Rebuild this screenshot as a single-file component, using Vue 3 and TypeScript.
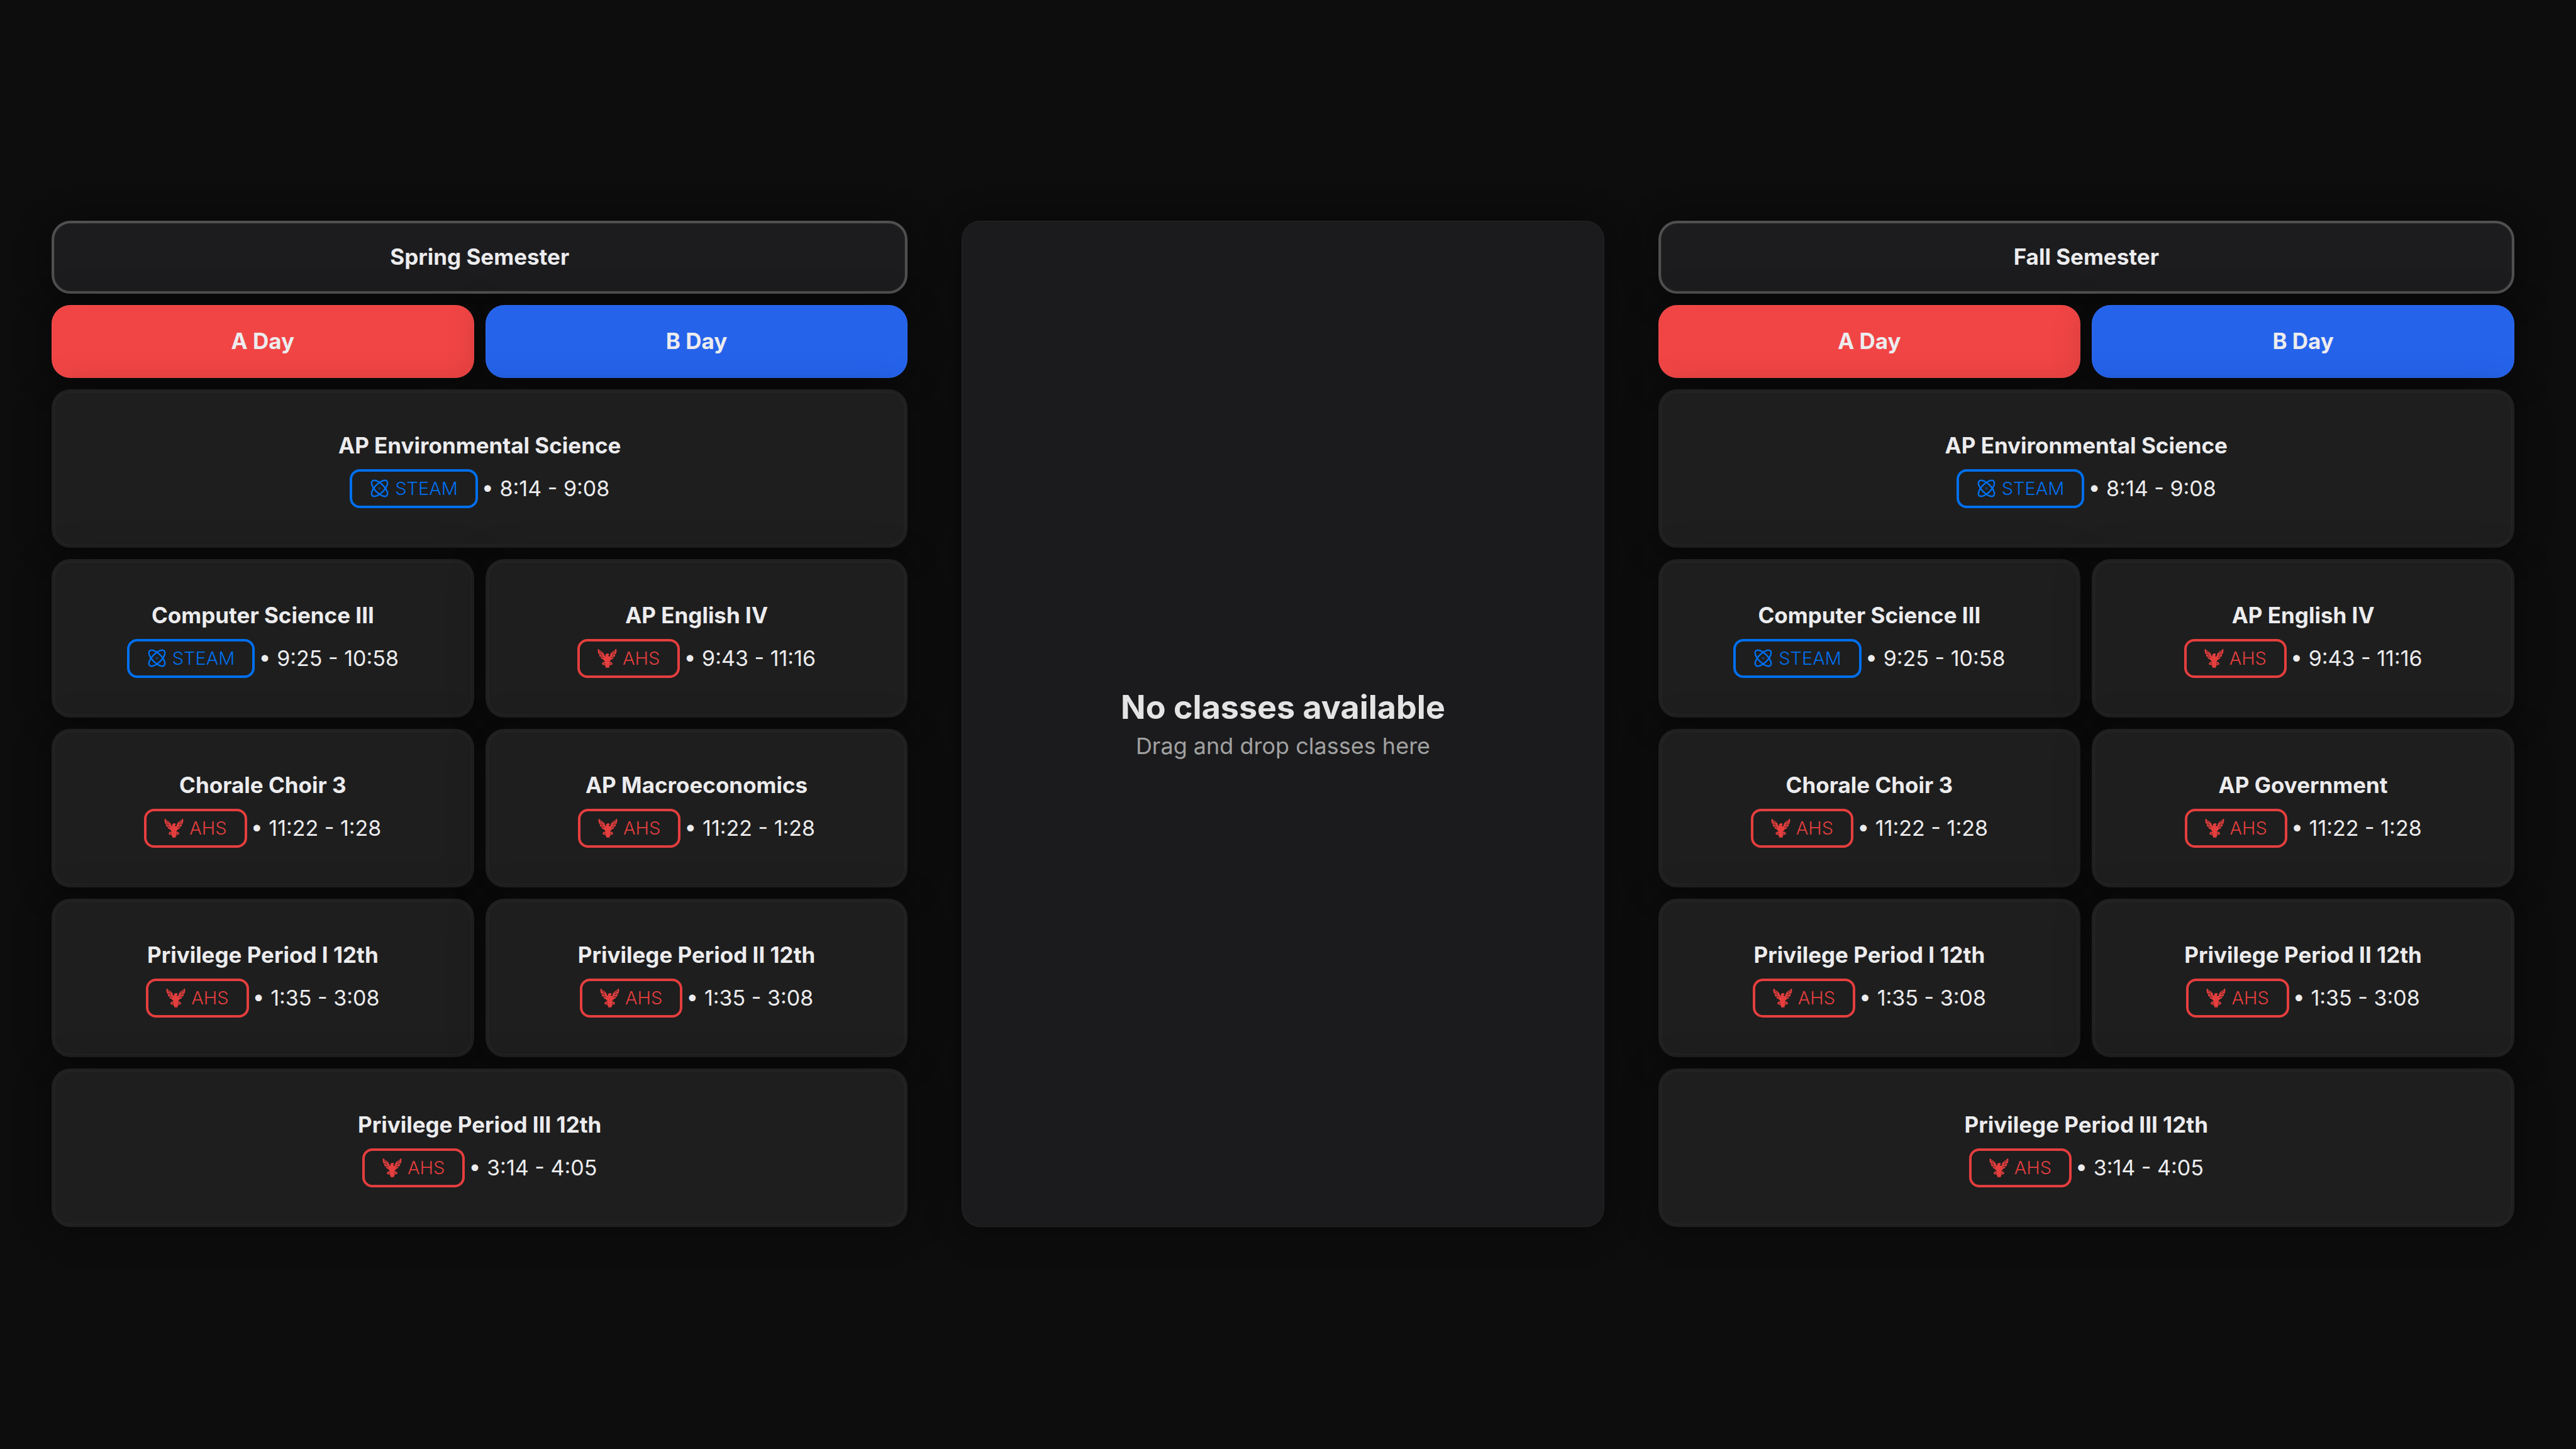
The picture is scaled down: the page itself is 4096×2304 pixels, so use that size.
<script setup lang="ts">
type Campus = 'STEAM' | 'AHS'

interface ClassBlock {
  name: string
  campus: Campus
  time: string
  wide?: boolean
}

interface Semester {
  title: string
  classes: ClassBlock[]
}

function buildClasses(thirdPeriodB: string): ClassBlock[] {
  return [
    { name: 'AP Environmental Science', campus: 'STEAM', time: '8:14 - 9:08', wide: true },
    { name: 'Computer Science III', campus: 'STEAM', time: '9:25 - 10:58' },
    { name: 'AP English IV', campus: 'AHS', time: '9:43 - 11:16' },
    { name: 'Chorale Choir 3', campus: 'AHS', time: '11:22 - 1:28' },
    { name: thirdPeriodB, campus: 'AHS', time: '11:22 - 1:28' },
    { name: 'Privilege Period I 12th', campus: 'AHS', time: '1:35 - 3:08' },
    { name: 'Privilege Period II 12th', campus: 'AHS', time: '1:35 - 3:08' },
    { name: 'Privilege Period III 12th', campus: 'AHS', time: '3:14 - 4:05', wide: true },
  ]
}

const spring: Semester = { title: 'Spring Semester', classes: buildClasses('AP Macroeconomics') }
const fall: Semester = { title: 'Fall Semester', classes: buildClasses('AP Government') }
</script>

<template>
  <main class="page">
    <template v-for="(semester, index) in [spring, fall]" :key="semester.title">
      <section v-if="index === 1" class="pool">
        <h2 class="pool-title">No classes available</h2>
        <p class="pool-hint">Drag and drop classes here</p>
      </section>

      <section class="semester">
        <h2 class="bar bar-title">{{ semester.title }}</h2>
        <h3 class="bar bar-a">A Day</h3>
        <h3 class="bar bar-b">B Day</h3>
        <article
          v-for="block in semester.classes"
          :key="block.name"
          class="card"
          :class="{ wide: block.wide }"
          draggable="true"
        >
          <h4 class="name">{{ block.name }}</h4>
          <div class="details">
            <span class="badge" :class="block.campus === 'STEAM' ? 'steam' : 'ahs'">
              <svg v-if="block.campus === 'STEAM'" class="icon" viewBox="1 1 22 22" aria-hidden="true">
                <g fill="none" stroke="currentColor" stroke-width="1.7">
                  <path d="M20.2 20.2c2.04-2.03.02-7.36-4.5-11.9-4.54-4.52-9.87-6.54-11.9-4.5-2.04 2.03-.02 7.36 4.5 11.9 4.54 4.52 9.87 6.54 11.9 4.5Z" />
                  <path d="M15.7 15.7c4.52-4.54 6.54-9.87 4.5-11.9-2.03-2.04-7.36-.02-11.9 4.5-4.52 4.54-6.54 9.87-4.5 11.9 2.03 2.04 7.36.02 11.9-4.5Z" />
                </g>
                <circle cx="12" cy="12" r="1.6" fill="currentColor" opacity="0.4" />
              </svg>
              <svg v-else class="icon" viewBox="0 0 138 138" aria-hidden="true">
                <path
                  fill="currentColor"
                  d="M5 2 18 15 32 23 44 34 50 52 56 58 56 46 62 38 74 36 82 40 82 58 88 52 94 34 106 23 120 15 133 2 136 16 132 36 126 42 124 56 115 62 110 74 98 78 88 90 86 97 98 96 106 106 104 116 92 117 84 123 82 137 58 137 56 123 46 117 34 116 32 106 40 96 52 97 50 90 40 78 28 74 23 62 14 56 12 42 6 36 2 16Z"
                />
                <g class="feathers">
                  <path d="M13 38 36 50M22 58 44 66M12 18 34 36" />
                  <path d="M125 38 102 50M116 58 94 66M126 18 104 36" />
                  <path d="M42 104 54 112M96 104 84 112" />
                </g>
                <circle class="eye" cx="82" cy="52" r="5" />
              </svg>
              {{ block.campus }}
            </span>
            <span class="time">• {{ block.time }}</span>
          </div>
        </article>
      </section>
    </template>
  </main>
</template>

<style>
body {
  margin: 0;
  background: #0d0d0d;
}
</style>

<style scoped>
.page {
  box-sizing: border-box;
  min-height: 100vh;
  padding: 0 98px 2px 82px;
  display: grid;
  grid-template-columns: 4fr 3fr 4fr;
  gap: 86px;
  align-content: center;
  background: #0d0d0d;
  color: #ececee;
  font-family: Inter, 'Liberation Sans', sans-serif;
}

h2,
h3,
h4,
p {
  margin: 0;
}

.semester {
  display: grid;
  grid-template-columns: 1fr 1fr;
  gap: 18px;
}

.bar,
.card,
.pool {
  box-sizing: border-box;
  border-radius: 30px;
  box-shadow:
    0 0 32px rgba(0, 0, 0, 0.06),
    0 4px 64px rgba(0, 0, 0, 0.22),
    inset 0 0 2px rgba(255, 255, 255, 0.15);
}

.bar {
  height: 116px;
  padding-bottom: 2px;
  display: flex;
  align-items: center;
  justify-content: center;
  font-size: 35px;
  line-height: 51px;
  font-weight: 700;
}

.bar-title {
  grid-column: 1 / -1;
  border: 4px solid #505050;
  background: #1c1c1e;
}

.bar-a {
  background: #f14545;
}

.bar-b {
  background: #2563eb;
}

.card {
  height: 252px;
  border: 4px solid #202022;
  background: #1e1e1e;
  display: flex;
  flex-direction: column;
  align-items: center;
  justify-content: center;
  gap: 12px;
}

.wide {
  grid-column: 1 / -1;
}

.name {
  font-size: 35px;
  line-height: 51px;
  font-weight: 700;
}

.details {
  display: flex;
  align-items: center;
  gap: 6px;
}

.badge {
  box-sizing: border-box;
  height: 62px;
  padding: 0 28px;
  border: 4px solid;
  border-radius: 16px;
  display: flex;
  align-items: center;
  gap: 9px;
  font-size: 29px;
  line-height: 40px;
  font-weight: 300;
}

.steam {
  color: #006fee;
}

.ahs {
  color: #e53e3e;
}

.icon {
  width: 31px;
  height: 31px;
}

.feathers {
  fill: none;
  stroke: #1e1e1e;
  stroke-width: 5;
  opacity: 0.7;
}

.eye {
  fill: #1e1e1e;
}

.time {
  font-size: 34px;
  line-height: 51px;
  white-space: nowrap;
}

.pool {
  background: #1b1b1d;
  display: flex;
  flex-direction: column;
  align-items: center;
  justify-content: center;
  gap: 2px;
}

.pool-title {
  color: #e4e4e4;
  font-size: 52px;
  line-height: 68px;
  font-weight: 700;
}

.pool-hint {
  color: #a1a1a1;
  font-size: 36px;
  line-height: 51px;
}
</style>
